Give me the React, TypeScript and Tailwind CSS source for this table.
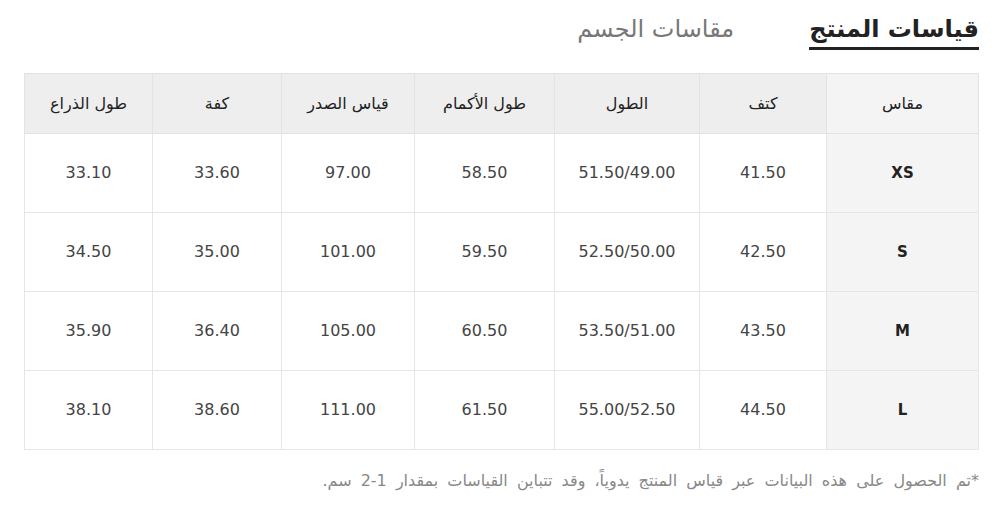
import React from 'react';

const headers = ['مقاس', 'كتف', 'الطول', 'طول الأكمام', 'قياس الصدر', 'كفة', 'طول الذراع'];
const widths = ['w-[152px]', 'w-[127px]', 'w-[145px]', 'w-[140px]', 'w-[133px]', 'w-[129px]', 'w-[128px]'];

const rows = [
  ['XS', '41.50', '51.50/49.00', '58.50', '97.00', '33.60', '33.10'],
  ['S', '42.50', '52.50/50.00', '59.50', '101.00', '35.00', '34.50'],
  ['M', '43.50', '53.50/51.00', '60.50', '105.00', '36.40', '35.90'],
  ['L', '44.50', '55.00/52.50', '61.50', '111.00', '38.60', '38.10'],
];

const App: React.FC = () => {
  return (
    <div
      dir="rtl"
      className="w-[1000px] h-[527px] bg-white pr-[21px] pl-[25px] pt-[12px]"
      style={{ fontFamily: '"DejaVu Sans", "Noto Sans", sans-serif' }}
    >
      {/* tabs */}
      <div className="flex items-start gap-[75px] h-[61px]">
        <div className="text-[24px] font-bold text-[#222] leading-[34px] border-b-[3px] border-[#222] pb-[1px]">
          قياسات المنتج
        </div>
        <div className="text-[24px] text-[#777] leading-[34px]">مقاسات الجسم</div>
      </div>

      <table className="table-fixed border-collapse w-[954px] border border-[#e6e6e6]">
        <thead>
          <tr className="h-[60px] bg-[#eeeeee]">
            {headers.map((h, i) => (
              <th
                key={h}
                className={`${widths[i]} border border-[#e3e3e3] text-[16px] font-normal text-[#222] ${i === 0 ? 'bg-[#f4f4f4]' : ''}`}
              >
                {h}
              </th>
            ))}
          </tr>
        </thead>
        <tbody>
          {rows.map((r) => (
            <tr key={r[0]} className="h-[79px]">
              {r.map((c, i) => (
                <td
                  key={i}
                  className={
                    i === 0
                      ? 'border border-[#e6e6e6] bg-[#f4f4f4] text-center text-[15px] font-bold text-[#222]'
                      : 'border border-[#e6e6e6] text-center text-[16px] text-[#444]'
                  }
                  dir="ltr"
                >
                  {c}
                </td>
              ))}
            </tr>
          ))}
        </tbody>
      </table>

      <p className="mt-[21px] text-[16px] leading-[20px] text-[#888] [word-spacing:4px]">
        *تم الحصول على هذه البيانات عبر قياس المنتج يدوياً، وقد تتباين القياسات بمقدار 1-2 سم.
      </p>
    </div>
  );
};

export default App;
